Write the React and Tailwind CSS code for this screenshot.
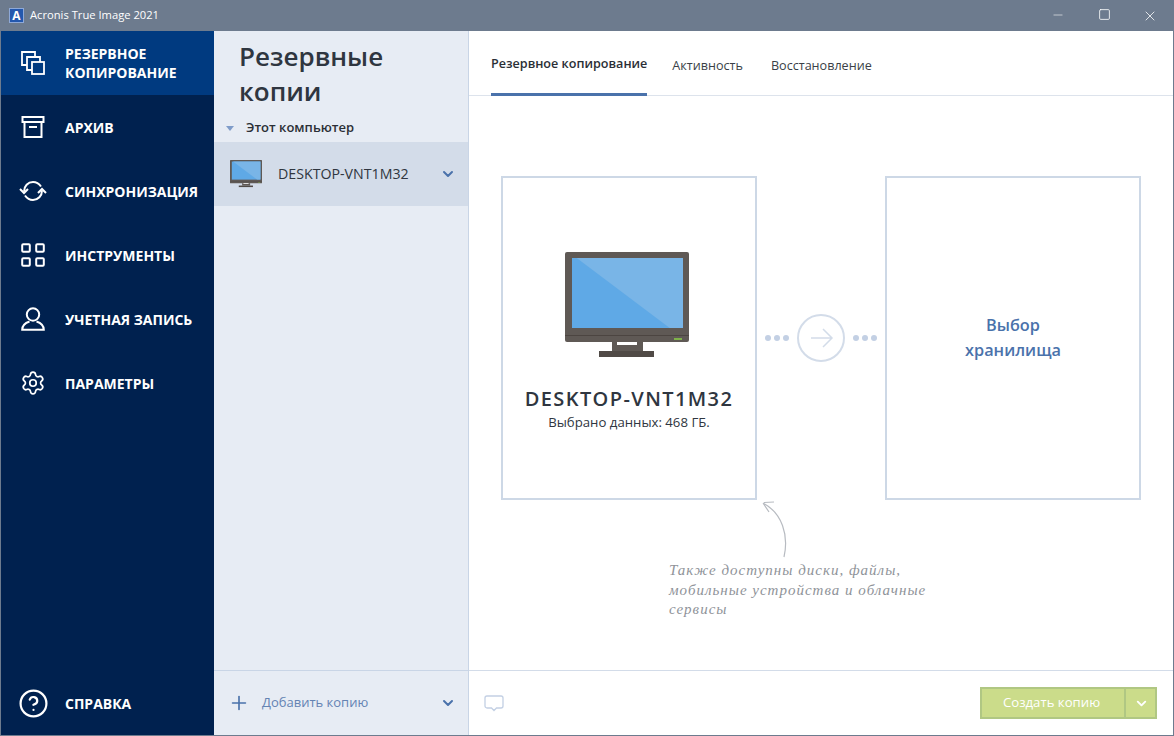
import React from 'react';
import { Minus, Square, X, Plus, ChevronDown, Settings, CircleHelp } from 'lucide-react';

const CopyIcon = () => (
  <svg width="24" height="24" viewBox="0 0 24 24" fill="none" stroke="white" strokeWidth="1.800">
    <path d="M6 14H1V1h13v5" />
    <path d="M11 19H6V6h13v5" />
    <rect x="11" y="11" width="12" height="12" />
  </svg>
);

const ArchiveIcon = () => (
  <svg width="24" height="24" viewBox="0 0 24 24" fill="none" stroke="white" strokeWidth="2">
    <path d="M1.500 2h21v5h-21z" />
    <path d="M3.500 7v15h17V7" />
    <path d="M8 12h8" />
  </svg>
);

const SyncIcon = () => (
  <svg width="28" height="24" viewBox="0 0 28 24" fill="none" stroke="white" strokeWidth="2">
    <path d="M5 12.500C5 7 9 3 14 3c3.500 0 6 1.600 8 4.500" />
    <path d="M23 11.500C23 17 19 21 14 21c-3.500 0-6-1.600-8-4.500" />
    <path d="M1 10l4 4 4-4" />
    <path d="M19 14l4-4 4 4" />
  </svg>
);

const GridIcon = () => (
  <svg width="24" height="24" viewBox="0 0 24 24" fill="none" stroke="white" strokeWidth="2">
    <rect x="1.200" y="1.200" width="7.600" height="7.600" rx="1" />
    <rect x="15.200" y="1.200" width="7.600" height="7.600" rx="1" />
    <rect x="1.200" y="15.200" width="7.600" height="7.600" rx="1" />
    <rect x="15.200" y="15.200" width="7.600" height="7.600" rx="1" />
  </svg>
);

const UserIcon = () => (
  <svg width="24" height="24" viewBox="0 0 24 24" fill="none" stroke="white" strokeWidth="2">
    <circle cx="12" cy="7.500" r="6.200" />
    <path d="M8.500 14.500C4 16 1.200 18 1.200 22.800H22.800C22.800 18 20 16 15.500 14.500" />
  </svg>
);

const ChatIcon = () => (
  <svg width="20" height="17" viewBox="0 0 20 17" fill="none" stroke="#c3d0e4" strokeWidth="1.300">
    <path d="M3 1h14a2 2 0 0 1 2 2v8a2 2 0 0 1-2 2h-4.500L10 15.500 7.500 13H3a2 2 0 0 1-2-2V3a2 2 0 0 1 2-2z" />
  </svg>
);

// screen, frame and stand of the computer picture, 124 wide by 105 high
const Monitor = ({ className }) => (
  <svg className={className} viewBox="0 0 124 105">
    <rect x="0" y="0" width="124" height="90" rx="2" fill="#5f5955" />
    <rect x="0" y="83" width="124" height="1" fill="#4c4541" />
    <rect x="7" y="6" width="111" height="70" fill="#5fa9e6" />
    <polygon points="11.700,6 118,6 118,76 104.700,76" fill="#79b5e7" />
    <rect x="109" y="86" width="8" height="2" fill="#7fb24a" />
    <rect x="47" y="90" width="31" height="9" fill="#5f5955" />
    <rect x="52" y="90" width="20" height="3" fill="#ffffff" />
    <rect x="34" y="99" width="55" height="6" fill="#504a46" />
  </svg>
);

const navItems = [
  { label: ['РЕЗЕРВНОЕ', 'КОПИРОВАНИЕ'], icon: <CopyIcon />, active: true },
  { label: ['АРХИВ'], icon: <ArchiveIcon /> },
  { label: ['СИНХРОНИЗАЦИЯ'], icon: <SyncIcon /> },
  { label: ['ИНСТРУМЕНТЫ'], icon: <GridIcon /> },
  { label: ['УЧЕТНАЯ ЗАПИСЬ'], icon: <UserIcon /> },
  { label: ['ПАРАМЕТРЫ'], icon: <Settings size={26} color="white" strokeWidth={1.600} /> },
];

const NavItem = ({ label, icon, active }) => (
  <div className={`flex h-16 items-center ${active ? 'bg-[#003a80]' : ''}`}>
    <div className="flex w-16 justify-center">{icon}</div>
    <div className="text-[14px] font-bold leading-[19px] text-white">
      {label.map((line) => (
        <div key={line}>{line}</div>
      ))}
    </div>
  </div>
);

const Dots = () => (
  <div className="flex gap-[3px]">
    <span className="h-[6px] w-[6px] rounded-full bg-[#c3d0e4]" />
    <span className="h-[6px] w-[6px] rounded-full bg-[#c3d0e4]" />
    <span className="h-[6px] w-[6px] rounded-full bg-[#c3d0e4]" />
  </div>
);

export default function App() {
  return (
    <div className="flex h-[736px] w-[1174px] flex-col overflow-hidden border-x border-b border-[#6d7b8e] bg-white font-['Open_Sans',sans-serif] text-[#2b2f36]">
      {/* Title bar */}
      <div className="flex h-[31px] shrink-0 items-center bg-[#6d7b8e] text-white">
        <div className="ml-[9px] flex h-[13px] w-[13px] items-center justify-center bg-[#2458ad] text-[12px] font-bold leading-none outline outline-1 outline-[#8ea9d8]">
          A
        </div>
        <div className="ml-[7px] text-[11.200px]">Acronis True Image 2021</div>
        <div className="ml-auto flex pt-[1px]">
          <div className="flex w-[46px] justify-center"><Minus size={14} strokeWidth={1} /></div>
          <div className="flex w-[46px] justify-center"><Square size={13} strokeWidth={1.500} /></div>
          <div className="flex w-[46px] justify-center"><X size={16} strokeWidth={1.200} /></div>
        </div>
      </div>

      <div className="flex min-h-0 flex-1">
        {/* Sidebar */}
        <div className="flex w-[213px] shrink-0 flex-col bg-[#00214f]">
          {navItems.map((item) => (
            <NavItem key={item.label[0]} {...item} />
          ))}
          <div className="mt-auto flex h-16 items-center">
            <div className="flex w-16 justify-center"><CircleHelp size={31} color="white" strokeWidth={1.700} /></div>
            <div className="text-[14px] font-bold text-white">СПРАВКА</div>
          </div>
        </div>

        {/* Backup list */}
        <div className="flex w-[255px] shrink-0 flex-col border-r border-[#c9d5e6] bg-[#e7ecf4]">
          <h1 className="px-[25px] pt-[8px] text-[26px] font-semibold leading-[35px] text-[#2f3640]">Резервные копии</h1>
          <div className="mt-[8px] flex h-[22px] items-center pl-[12px] text-[13px] font-semibold text-[#2b2f36]">
            <span className="h-0 w-0 border-x-[4.500px] border-t-[5px] border-x-transparent border-t-[#7f9cc9]" />
            <span className="ml-[12px]">Этот компьютер</span>
          </div>
          <div className="mt-[3px] flex h-16 shrink-0 items-center bg-[#d3dce9] pl-[16px] pr-[12px]">
            <Monitor className="w-[32px]" />
            <span className="ml-[16px] text-[14.200px] text-[#2f3640]">DESKTOP-VNT1M32</span>
            <ChevronDown className="ml-auto" size={16} color="#4a72ab" strokeWidth={3} />
          </div>
          <div className="mt-auto flex h-[65px] shrink-0 items-center border-t border-[#c9d5e6] pl-[14px] pr-[12px]">
            <Plus size={22} color="#4a72ab" strokeWidth={1.800} />
            <span className="ml-[12px] text-[13px] text-[#6483b3]">Добавить копию</span>
            <ChevronDown className="ml-auto" size={16} color="#4a72ab" strokeWidth={3} />
          </div>
        </div>

        {/* Main */}
        <div className="flex min-w-0 flex-1 flex-col">
          <div className="flex h-[65px] shrink-0 gap-[25px] border-b border-[#dde3ec] pl-[22px] text-[12.600px]">
            <div className="flex h-[65px] items-center border-b-[3px] border-[#4a72ab] pt-[5px] font-semibold text-[#2b2f36]">Резервное копирование</div>
            <div className="flex h-[65px] items-center pt-[5px] text-[#3a3f47]">Активность</div>
            <div className="ml-[3px] flex h-[65px] items-center pt-[5px] text-[#3a3f47]">Восстановление</div>
          </div>

          <div className="flex-1 pl-[32px] pt-[80px]">
            <div className="flex">
              <div className="flex h-[324px] w-[256px] flex-col items-center border-2 border-[#cdd8e6] pt-[74px]">
                <Monitor className="mr-[4px] w-[124px]" />
                <div className="mt-[28px] text-[20px] font-semibold leading-[27px] tracking-[1.400px] text-[#2f3640]">DESKTOP-VNT1M32</div>
                <div className="mt-[1px] text-[13.200px] leading-[18px] text-[#2f3640]">Выбрано данных: 468 ГБ.</div>
              </div>
              <div className="flex w-[128px] items-center justify-center gap-[8px]">
                <Dots />
                <svg width="48" height="48" viewBox="0 0 48 48" fill="none" stroke="#d3dce9" strokeWidth="2">
                  <circle cx="24" cy="24" r="23" />
                  <path d="M14 24h20M26 15l9 9-9 9" strokeWidth="1.500" />
                </svg>
                <Dots />
              </div>
              <div className="flex h-[324px] w-[256px] items-center justify-center border-2 border-[#cdd8e6] text-center text-[16.300px] font-semibold leading-[25px] text-[#4a72ab]">
                Выбор<br />хранилища
              </div>
            </div>
            <svg className="ml-[255px] mt-[-1px]" width="40" height="60" viewBox="0 0 40 60" fill="none" stroke="#b7bbc1" strokeWidth="1.200">
              <path d="M28 58C33 36 26 14 7 4M8 3.500l10-.5M7 4l6 9" />
            </svg>
            <div className="ml-[168px] mt-[2px] font-['Liberation_Serif',serif] text-[15px] italic leading-[19.500px] tracking-[1px] text-[#8f9399]">
              Также доступны диски, файлы,<br />мобильные устройства и облачные<br />сервисы
            </div>
          </div>

          <div className="flex h-[65px] shrink-0 items-center border-t border-[#d3dce9] pl-[15px] pr-[16px]">
            <ChatIcon />
            <div className="ml-auto flex h-[32px] border-2 border-[#b0c783] bg-[#cbdc8a] text-[13.200px] text-white">
              <div className="flex w-[144px] items-center justify-center border-r-2 border-[#b0c783] pr-[3px]">Создать копию</div>
              <div className="ml-[2px] flex w-[27px] items-center justify-center"><ChevronDown size={15} strokeWidth={3} /></div>
            </div>
          </div>
        </div>
      </div>
    </div>
  );
}
